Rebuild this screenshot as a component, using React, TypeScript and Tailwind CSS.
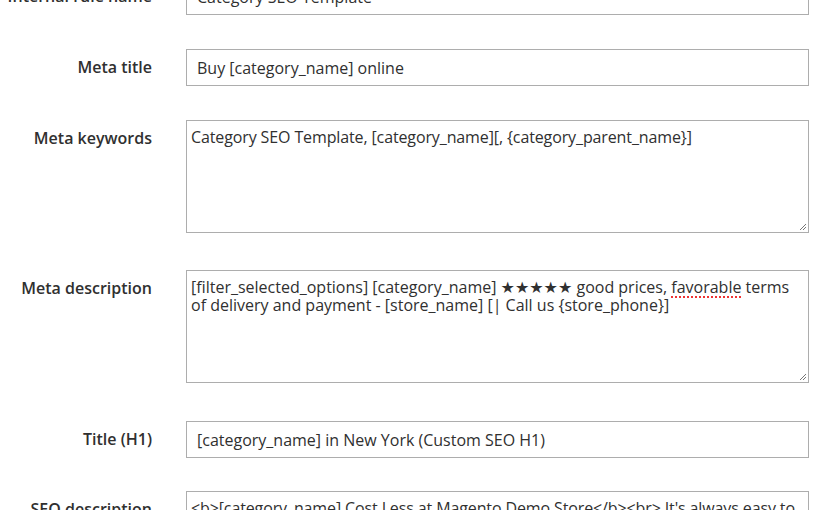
const font = { fontFamily: '"Open Sans", "DejaVu Sans", sans-serif' };

function Label({ text, required }: { text: string; required?: boolean }) {
  return (
    <div className="relative w-[152px] shrink-0 pt-[8px] text-right text-[16px] leading-[20px] font-semibold text-[#303030]">
      {text}
      {required && (
        <span className="absolute left-[163px] top-[7px] text-[14px] text-[#eb5202]">*</span>
      )}
    </div>
  );
}

function TextInput({ value }: { value: string }) {
  return (
    <div className="ml-[34px] flex h-[37px] w-[623px] items-center border border-[#adadad] bg-white pl-[10px] text-[16px] text-[#303030]">
      {value}
    </div>
  );
}

function Grip() {
  return (
    <svg className="absolute bottom-[1px] right-[1px]" width="9" height="9" viewBox="0 0 9 9">
      <path d="M8 2 L2 8 M8 5 L5 8" stroke="#777" strokeWidth="1" />
    </svg>
  );
}

function TextArea({ children, tight }: { children: React.ReactNode; tight?: boolean }) {
  return (
    <div
      className={
        tight
          ? 'relative ml-[34px] h-[113px] w-[623px] border border-[#adadad] bg-white px-[4px] pt-[7px] text-[16px] leading-[18px] tracking-[-0.12px] text-[#303030]'
          : 'relative ml-[34px] h-[113px] w-[623px] border border-[#adadad] bg-white px-[4px] pt-[7px] text-[16px] leading-[18px] text-[#303030]'
      }
    >
      {children}
      <Grip />
    </div>
  );
}

export default function App() {
  return (
    <div className="h-[510px] w-[825px] overflow-hidden bg-white" style={font}>
      <div className="-mt-[22px] flex flex-col">
        <div className="flex items-start">
          <Label text="Internal rule name" required />
          <TextInput value="Category SEO Template" />
        </div>

        <div className="mt-[34px] flex items-start">
          <Label text="Meta title" />
          <TextInput value="Buy [category_name] online" />
        </div>

        <div className="mt-[34px] flex items-start">
          <Label text="Meta keywords" />
          <TextArea tight>Category SEO Template, [category_name][, {'{category_parent_name}'}]</TextArea>
        </div>

        <div className="mt-[37px] flex items-start">
          <Label text="Meta description" />
          <TextArea>
            [filter_selected_options] [category_name] ★★★★★ good prices,{' '}
            <span className="underline decoration-[#e33] decoration-dotted decoration-2 underline-offset-[3px]">favorable</span>{' '}
            terms of delivery and payment - [store_name] [| Call us {'{store_phone}'}]
          </TextArea>
        </div>

        <div className="mt-[38px] flex items-start">
          <Label text="Title (H1)" />
          <TextInput value="[category_name] in New York (Custom SEO H1)" />
        </div>

        <div className="mt-[33px] flex items-start">
          <Label text="SEO description" />
          <TextArea tight>
            {"<b>[category_name] Cost Less at Magento Demo Store</b><br> It's always easy to find what you need"}
          </TextArea>
        </div>
      </div>
    </div>
  );
}
